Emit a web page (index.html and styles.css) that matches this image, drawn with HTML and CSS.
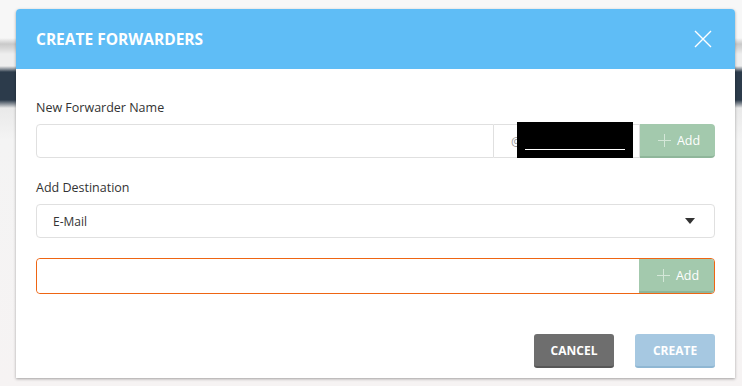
FILE: index.html
```html
<!DOCTYPE html>
<html lang="en">
<head>
    <meta charset="UTF-8">
    <meta name="viewport" content="width=device-width, initial-scale=1.0">
    <title>Create Forwarders</title>
    <link rel="stylesheet" href="styles.css">
</head>
<body>

    <div class="modal">
        <div class="modal-header">
            <h2>CREATE FORWARDERS</h2>
            <button class="modal-close" aria-label="Close">
                <svg width="18" height="18" viewBox="0 0 18 18">
                    <path d="M1 1 L17 17 M17 1 L1 17" stroke="#fff" stroke-width="1.4" fill="none"/>
                </svg>
            </button>
        </div>

        <div class="modal-body">
            <label class="field-label">New Forwarder Name</label>
            <div class="input-group">
                <input type="text" class="group-input">
                <div class="group-addon">
                    @
                    <div class="redacted"><span></span></div>
                </div>
                <button class="btn-add">
                    <svg width="13" height="13" viewBox="0 0 13 13">
                        <path d="M6.5 0 V13 M0 6.5 H13" stroke="#d4e7d8" stroke-width="1" fill="none"/>
                    </svg>
                    Add
                </button>
            </div>

            <label class="field-label second">Add Destination</label>
            <div class="select-box">
                <span>E-Mail</span>
                <svg width="10" height="6" viewBox="0 0 10 6">
                    <path d="M0 0 H10 L5 6 Z" fill="#333"/>
                </svg>
            </div>

            <div class="input-group focused">
                <input type="text" class="group-input">
                <button class="btn-add">
                    <svg width="13" height="13" viewBox="0 0 13 13">
                        <path d="M6.5 0 V13 M0 6.5 H13" stroke="#d4e7d8" stroke-width="1" fill="none"/>
                    </svg>
                    Add
                </button>
            </div>
        </div>

        <div class="modal-footer">
            <button class="btn btn-cancel">CANCEL</button>
            <button class="btn btn-create">CREATE</button>
        </div>
    </div>

</body>
</html>
```

FILE: styles.css
```css
body {
    font-family: 'Open Sans', 'Liberation Sans', sans-serif;
    margin: 0;
    height: 386px;
    overflow: hidden;
    background: linear-gradient(to bottom,
        #f7f7f7 0px, #f7f7f7 38px,
        #c9c9c9 44px, #d6d6d6 48px,
        #eeeeee 54px, #eeeeee 66px,
        #2c3b4b 72px, #2c3b4b 100px,
        #e9e9e9 108px, #f4f4f4 140px,
        #f6f3f3 386px);
    padding-top: 9px;
    box-sizing: border-box;
}

.modal {
    margin-left: 16px;
    width: 719px;
    height: 369px;
    background-color: #fff;
    border-radius: 4px 4px 0 0;
    box-shadow: 0 1px 3px rgba(0, 0, 0, 0.35);
    display: flex;
    flex-direction: column;
}

.modal-header {
    height: 60px;
    background-color: #5fbdf6;
    border-radius: 4px 4px 0 0;
    display: flex;
    align-items: center;
    justify-content: space-between;
    padding: 0 23px 0 20px;
}

.modal-header h2 {
    margin: 0;
    color: #fff;
    font-size: 15.5px;
    font-weight: 700;
}

.modal-close {
    background: none;
    border: none;
    padding: 0;
    width: 18px;
    height: 18px;
    cursor: pointer;
    display: flex;
}

.modal-body {
    padding: 30px 20px 0 20px;
}

.field-label {
    display: block;
    font-size: 12.5px;
    line-height: 18px;
    color: #333;
    margin-bottom: 7px;
}

.field-label.second {
    margin-top: 21px;
}

.input-group {
    display: flex;
    height: 34px;
}

.group-input {
    flex: 1;
    border: 1px solid #e0e0e0;
    border-radius: 4px 0 0 4px;
    padding: 0 12px;
    margin: 0;
    outline: none;
    box-sizing: border-box;
}

.group-addon {
    position: relative;
    width: 146px;
    border: 1px solid #e0e0e0;
    border-left: none;
    box-sizing: border-box;
    display: flex;
    align-items: center;
    padding-left: 17px;
    font-size: 12px;
    color: #999;
}

.redacted {
    position: absolute;
    left: 23px;
    top: -3px;
    width: 116px;
    height: 36px;
    background-color: #000;
}

.redacted span {
    position: absolute;
    left: 8px;
    top: 27px;
    width: 100px;
    height: 1px;
    background-color: #fff;
}

.btn-add {
    width: 75px;
    border: none;
    border-bottom: 2px solid #8fb69a;
    border-radius: 0 4px 4px 0;
    background-color: #a3c9ad;
    color: #fff;
    font-family: inherit;
    font-size: 12.5px;
    display: flex;
    align-items: center;
    justify-content: center;
    gap: 6px;
    padding: 0 0 0 3px;
    cursor: pointer;
}

.select-box {
    height: 34px;
    border: 1px solid #e0e0e0;
    border-radius: 4px;
    box-sizing: border-box;
    display: flex;
    align-items: center;
    justify-content: space-between;
    padding: 0 19px 0 16px;
    font-size: 12px;
    color: #333;
}

.input-group.focused {
    margin-top: 20px;
    height: 36px;
    border: 1px solid #ee6513;
    border-radius: 4px;
    box-sizing: border-box;
}

.input-group.focused .group-input {
    border: none;
}

.input-group.focused .btn-add {
    border-radius: 0 3px 3px 0;
}

.modal-footer {
    margin-top: auto;
    display: flex;
    justify-content: flex-end;
    gap: 21px;
    padding: 0 20px 10px 20px;
}

.btn {
    width: 80px;
    height: 34px;
    border: none;
    border-radius: 3px;
    color: #fff;
    font-family: inherit;
    font-size: 12px;
    font-weight: 700;
    cursor: pointer;
}

.btn-cancel {
    background-color: #6e6e6e;
    border-bottom: 2px solid #575757;
}

.btn-create {
    background-color: #a6c8e1;
    border-bottom: 2px solid #8fb7d3;
}
```
